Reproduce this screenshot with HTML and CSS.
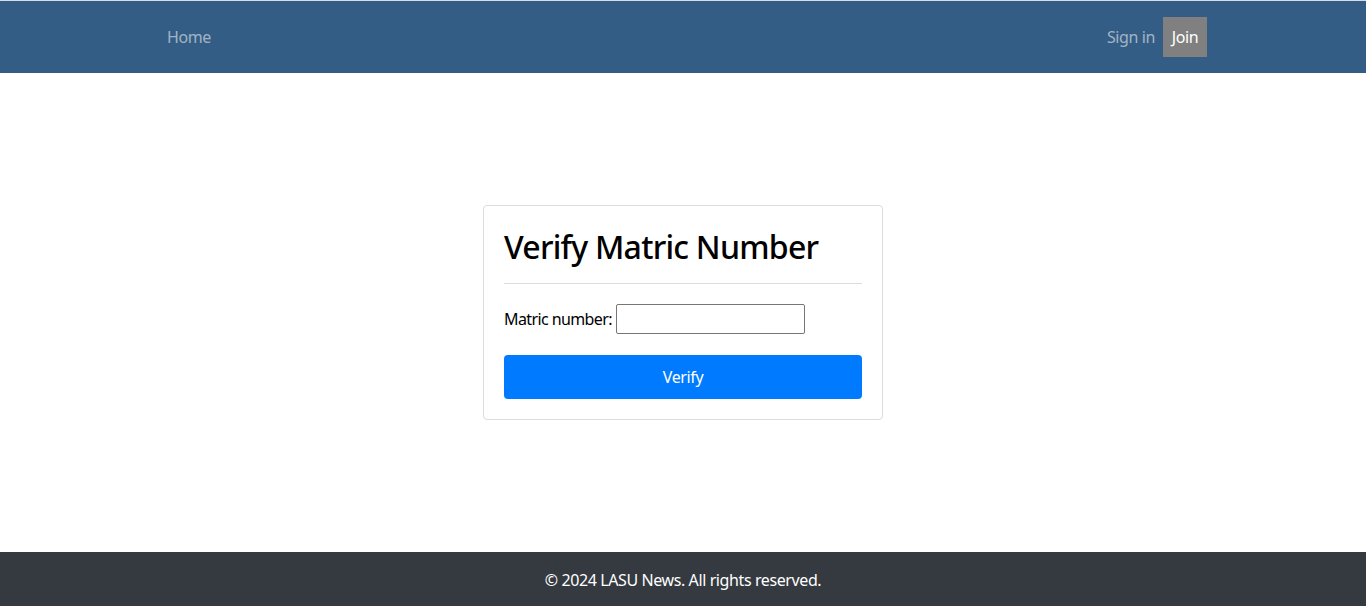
FILE: index.html
```html
<!DOCTYPE html>
<html lang="en">
<head>
<meta charset="utf-8">
<title>Verify Matric Number</title>
<link rel="stylesheet" href="styles.css">
</head>
<body>
<div class="page">
  <header class="navbar">
    <nav class="nav-left">
      <a class="nav-link" href="#">Home</a>
    </nav>
    <nav class="nav-right">
      <a class="nav-link" href="#">Sign in</a>
      <a class="nav-link join" href="#">Join</a>
    </nav>
  </header>
  <main class="main">
    <div class="card">
      <h1 class="card-title">Verify Matric Number</h1>
      <hr class="divider">
      <form class="form">
        <div class="field">
          <label class="label" for="matric">Matric number:</label>
          <input id="matric" class="input" type="text">
        </div>
        <button class="btn" type="button">Verify</button>
      </form>
    </div>
  </main>
  <footer class="footer">© 2024 LASU News. All rights reserved.</footer>
</div>
</body>
</html>
```

FILE: styles.css
```css
* { box-sizing: border-box; }
html, body { margin: 0; padding: 0; }
body {
  font-family: "Noto Sans", "Open Sans", sans-serif;
  font-size: 16px;
  letter-spacing: -0.4px;
  color: #212529;
  background: #fff;
}
.page {
  display: flex;
  flex-direction: column;
  min-height: 606px;
  border-top: 1px solid #d9dde2;
}
.navbar {
  height: 72px;
  background: #335d85;
  display: flex;
  align-items: center;
  justify-content: space-between;
  padding: 0 159px 0 159px;
}
.nav-left, .nav-right { display: flex; align-items: center; }
.nav-link {
  color: rgba(255,255,255,0.55);
  text-decoration: none;
  padding: 8px;
  line-height: 24px;
}
.nav-link.join {
  background: #808080;
  color: #fff;
  height: 40px;
  width: 44px;
  display: flex;
  align-items: center;
  justify-content: center;
  padding: 0;
}
.main {
  flex: 1;
  display: flex;
  align-items: center;
  justify-content: center;
}
.card {
  width: 400px;
  border: 1px solid #dcdcdc;
  border-radius: 4px;
  padding: 20px;
}
.card-title {
  margin: 0;
  font-size: 32px;
  font-weight: 500;
  letter-spacing: -0.75px;
  color: #000;
  line-height: 38px;
  padding-top: 2px;
}
.divider {
  border: 0;
  border-top: 1px solid #dcdcdc;
  margin: 17px 0 20px;
}
.field {
  display: flex;
  align-items: center;
  gap: 4px;
  color: #000;
}
.label { letter-spacing: -0.6px; }
.input {
  width: 189px;
  height: 30px;
  border: 1px solid #767676;
  border-radius: 2px;
  font: inherit;
}
.btn {
  margin-top: 21px;
  width: 100%;
  height: 44px;
  background: #007bff;
  color: #fff;
  border: 0;
  border-radius: 4px;
  font: inherit;
  letter-spacing: -0.4px;
}
.footer {
  height: 54px;
  background: #343a40;
  color: #fff;
  display: flex;
  align-items: center;
  justify-content: center;
  padding-top: 2px;
}
```
